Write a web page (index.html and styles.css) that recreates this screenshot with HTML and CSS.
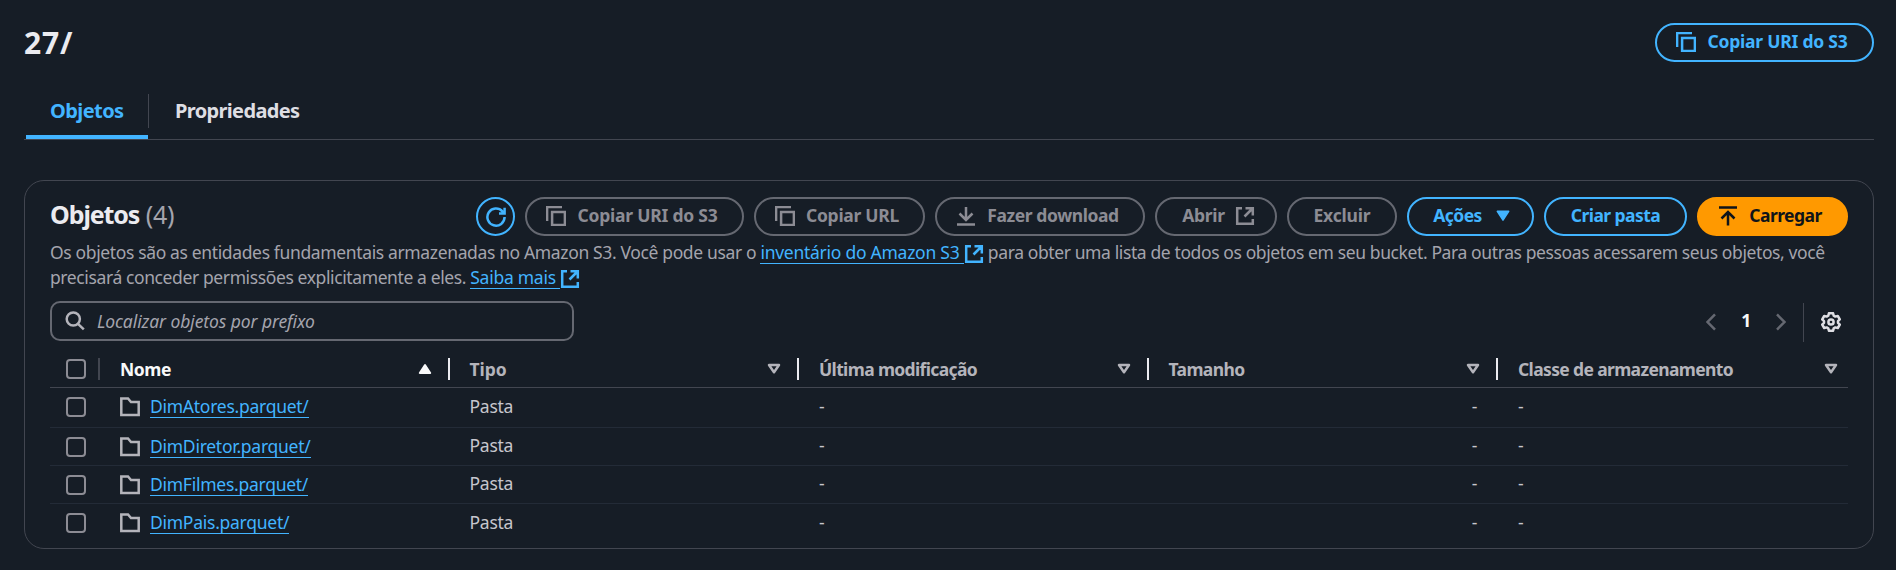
FILE: index.html
```html
<!DOCTYPE html>
<html lang="pt-BR">
<head>
<meta charset="utf-8">
<title>27/</title>
<link rel="stylesheet" href="styles.css">
</head>
<body>
<svg class="sprite" aria-hidden="true">
  <symbol id="copy" viewBox="0 0 20 20"><path d="M1.1 15V1.1H16M6.1 6.1H18.9V18.9H6.1Z"/></symbol>
  <symbol id="external" viewBox="0 0 20 20"><path d="M7 2.2H2.2V17.8H17.8V13M10.5 2.2H17.8V9.5M17.5 2.5L9.5 10.5"/></symbol>
  <symbol id="folder" viewBox="0 0 20 20"><path d="M1.3 18V1.5H8L11 5H18.7V18Z"/></symbol>
  <symbol id="sort" viewBox="0 0 14 12"><path d="M2 2H12L7 9.2Z"/></symbol>
</svg>
<main class="page">
  <header class="page-head">
    <h1>27/</h1>
    <button class="btn lead w-uri"><svg class="ico"><use href="#copy"/></svg><span class="t-uri">Copiar URI do S3</span></button>
  </header>
  <nav class="tabs">
    <a class="tab active">Objetos</a>
    <a class="tab second">Propriedades</a>
  </nav>
  <section class="card">
    <div class="card-head">
      <h2>Objetos <span>(4)</span></h2>
      <div class="actions">
        <button class="btn round"><svg class="ico" viewBox="0 0 20 20"><path d="M18.6 10A8.6 8.6 0 1 1 16.4 4.3L18.4 6.2M18.6 0.8V6.4H13"/></svg></button>
        <button class="btn off lead w-uri"><svg class="ico"><use href="#copy"/></svg><span class="t-uri">Copiar URI do S3</span></button>
        <button class="btn off lead w-url"><svg class="ico"><use href="#copy"/></svg><span class="t-url">Copiar URL</span></button>
        <button class="btn off lead w-down"><svg class="ico" viewBox="0 0 20 20"><path d="M10 1V13.5M3.5 7.5L10 14L16.5 7.5M1 18.4H19"/></svg><span class="t-down">Fazer download</span></button>
        <button class="btn off w-open"><span class="t-open">Abrir</span><svg class="ico"><use href="#external"/></svg></button>
        <button class="btn off w-del"><span class="t-del">Excluir</span></button>
        <button class="btn w-act"><span class="t-tight">Ações</span><svg class="caret" viewBox="0 0 14 12"><path d="M1.3 1.3H12.7L7 10.2Z"/></svg></button>
        <button class="btn w-new"><span class="t-tight">Criar pasta</span></button>
        <button class="btn primary lead w-up"><svg class="ico" viewBox="0 0 20 20"><path d="M1 1.6H19M10 19.5V6.5M3.5 12.5L10 6L16.5 12.5"/></svg><span class="t-tight">Carregar</span></button>
      </div>
    </div>
    <div class="desc">
      <p><span>Os objetos são as entidades fundamentais armazenadas no Amazon S3. Você pode usar o </span><a class="link">inventário do Amazon S3 </a><svg class="ico ext"><use href="#external"/></svg><span class="after"> para obter uma lista de todos os objetos em seu bucket. Para outras pessoas acessarem seus objetos, você</span></p>
      <p><span class="after">precisará conceder permissões explicitamente a eles. </span><a class="link">Saiba mais </a><svg class="ico ext"><use href="#external"/></svg></p>
    </div>
    <div class="tools">
      <div class="search"><svg class="ico" viewBox="0 0 20 20"><circle cx="8.3" cy="8" r="6.6"/><path d="M13 12.8L18.8 18.4"/></svg><span>Localizar objetos por prefixo</span></div>
      <div class="pager">
        <svg class="chev" viewBox="0 0 10 18"><path d="M9 1.4L1.6 9L9 16.6"/></svg>
        <b>1</b>
        <svg class="chev" viewBox="0 0 10 18"><path d="M1 1.4L8.4 9L1 16.6"/></svg>
        <i></i>
        <svg class="ico gear" viewBox="0 0 20 20"><path d="M8 1.2H12L12.7 3.7L14.3 4.6L16.8 4L18.8 7.4L17 9.2V10.8L18.8 12.6L16.8 16L14.3 15.4L12.7 16.3L12 18.8H8L7.3 16.3L5.7 15.4L3.2 16L1.2 12.6L3 10.8V9.2L1.2 7.4L3.2 4L5.7 4.6L7.3 3.7Z"/><circle cx="10" cy="10" r="2.6"/></svg>
      </div>
    </div>
    <div class="table">
      <div class="row head">
        <div class="pick"><span class="box"></span></div>
        <div class="cell sorted"><span>Nome</span><svg class="sort" viewBox="0 0 14 12"><path d="M1.8 10H12.2L7 2Z"/></svg></div>
        <div class="cell"><span class="t-tipo">Tipo</span><svg class="sort"><use href="#sort"/></svg></div>
        <div class="cell"><span>Última modificação</span><svg class="sort"><use href="#sort"/></svg></div>
        <div class="cell"><span>Tamanho</span><svg class="sort"><use href="#sort"/></svg></div>
        <div class="cell last"><span>Classe de armazenamento</span><svg class="sort"><use href="#sort"/></svg></div>
      </div>
      <div class="row r1"><div class="pick"><span class="box"></span></div><div class="cell"><svg class="ico"><use href="#folder"/></svg><a class="link">DimAtores.parquet/</a></div><div class="cell">Pasta</div><div class="cell">-</div><div class="cell num">-</div><div class="cell">-</div></div>
      <div class="row"><div class="pick"><span class="box"></span></div><div class="cell"><svg class="ico"><use href="#folder"/></svg><a class="link">DimDiretor.parquet/</a></div><div class="cell">Pasta</div><div class="cell">-</div><div class="cell num">-</div><div class="cell">-</div></div>
      <div class="row"><div class="pick"><span class="box"></span></div><div class="cell"><svg class="ico"><use href="#folder"/></svg><a class="link">DimFilmes.parquet/</a></div><div class="cell">Pasta</div><div class="cell">-</div><div class="cell num">-</div><div class="cell">-</div></div>
      <div class="row"><div class="pick"><span class="box"></span></div><div class="cell"><svg class="ico"><use href="#folder"/></svg><a class="link">DimPais.parquet/</a></div><div class="cell">Pasta</div><div class="cell">-</div><div class="cell num">-</div><div class="cell">-</div></div>
    </div>
  </section>
</main>
</body>
</html>
```
FILE: styles.css
```css
* { box-sizing: border-box; }
body {
  margin: 0;
  background: #161d26;
  color: #c6c6cd;
  font: 17.5px/25px "Noto Sans", sans-serif;
  letter-spacing: -0.26px;
  overflow: hidden;
}
.sprite { display: none; }
svg { fill: none; stroke: currentColor; stroke-width: 2.5; flex: none; }
.ico { width: 20px; height: 20px; }
.page { padding: 23px 22px 0 24px; }

.page-head { display: flex; justify-content: space-between; height: 39px; }
h1 { margin: 0; font-size: 30px; line-height: 40px; letter-spacing: 0.9px; color: #ebebf0; }

.btn {
  display: flex; align-items: center; justify-content: center; gap: 11px;
  height: 39px; padding: 0 0 1px;
  border: 2px solid #42b4ff; border-radius: 20px;
  background: transparent; color: #42b4ff;
  font: bold 17.5px/25px "Noto Sans", sans-serif;
  white-space: nowrap;
}
.btn span { margin-top: -1px; }
.btn.lead { padding-right: 5px; }
.btn.off { border-color: #656871; color: #8c8c94; }
.btn.primary { border-color: #ff9900; background: #ff9900; color: #0f141a; }
.btn.round { width: 39px; padding: 0; }
.w-uri { width: 219px; }
.w-url { width: 171px; }
.w-down { width: 210px; }
.w-open { width: 122px; padding-left: 5px; gap: 10px; }
.w-del { width: 110px; }
.w-act { width: 127px; padding-left: 2px; gap: 14px; }
.w-new { width: 143px; }
.w-up { width: 151px; }
.t-uri { letter-spacing: -0.22px; }
.t-url { letter-spacing: -0.28px; }
.t-down { letter-spacing: -0.41px; }
.t-open { letter-spacing: -0.31px; }
.t-del { letter-spacing: -0.18px; }
.t-tight { letter-spacing: -0.56px; }
.caret { width: 14px; height: 12px; }
.caret path { fill: currentColor; stroke-width: 1.5; stroke-linejoin: round; }

.tabs { display: flex; height: 77px; padding: 32px 2px 0; border-bottom: 1px solid #424650; margin-bottom: 41px; height: 78px; }
.tab { height: 45px; font-weight: bold; font-size: 20px; line-height: 34px; color: #dedee3; letter-spacing: -0.65px; }
.tab.active { width: 122px; padding-left: 24px; color: #42b4ff; letter-spacing: -0.58px; border-bottom: 4px solid #42b4ff; border-radius: 2px 2px 0 0; }
.tab.second { height: 34px; padding-left: 26px; border-left: 1px solid #424650; }

.card { margin-top: 40px; height: 369px; padding: 16px 25px 0; border: 1px solid #424650; border-radius: 20px; }
.tabs + .card { margin-top: -1px; }
.card-head { display: flex; justify-content: space-between; height: 39px; }
h2 { margin: 0; font-size: 25px; line-height: 35px; letter-spacing: -1.1px; color: #ebebf0; }
h2 span { font-weight: normal; letter-spacing: -0.3px; color: #a4a4ad; margin-left: 1px; }
.actions { display: flex; gap: 10px; }

.desc { padding-top: 4px; color: #a4a4ad; letter-spacing: -0.36px; }
.desc p { margin: 0; height: 25px; display: flex; white-space: pre; }
.link { color: #42b4ff; box-shadow: inset 0 -1px 0 #42b4ff; height: 24px; letter-spacing: -0.26px; }
.ext { margin-top: 4px; color: #42b4ff; }
.after { letter-spacing: -0.39px; }

.tools { display: flex; justify-content: space-between; margin-top: 11px; height: 40px; }
.search { display: flex; align-items: center; width: 524px; padding-left: 13px; gap: 12px; border: 2px solid #656871; border-radius: 10px; color: #b4b4bb; font-style: italic; letter-spacing: -0.09px; }
.search span { color: #a4a4ad; }
.pager { display: flex; align-items: center; padding: 2px 7px 0 0; color: #656871; }
.pager b { width: 60px; text-align: center; color: #f9f9fa; padding-bottom: 3px; }
.pager i { width: 1px; height: 39px; margin: 0 17px; background: #424650; }
.chev { width: 10px; height: 18px; }
.gear { color: #dedee3; stroke-linejoin: round; }

.table { margin-top: 8px; }
.row { display: grid; grid-template-columns: 50px 349.5px 349.5px 349.5px 349.5px 1fr; height: 38px; align-items: center; border-bottom: 1px solid #232b37; }
.row:last-child { border: 0; }
.row.r1 { height: 40px; padding-bottom: 1px; }
.row.head { height: 39px; font-weight: bold; border-color: #424650; color: #b4b4bb; letter-spacing: -0.64px; padding-top: 2px; }
.pick { display: flex; height: 22px; padding: 0 0 0 16px; align-items: center; }
.head .pick { border-right: 2px solid #424650; }
.box { width: 20px; height: 20px; border: 2px solid #8c8c94; border-radius: 4px; }
.cell { display: flex; align-items: center; height: 22px; padding-left: 20px; }
.row:not(.head) .cell { padding-bottom: 2px; }
.cell .ico { margin: 2px 10px 0 0; color: #b4b4bb; }
.head .cell { justify-content: space-between; padding-right: 16px; border-right: 2px solid #ebebf0; }
.head .last { border: 0; padding-right: 10px; }
.head .sorted { color: #f9f9fa; letter-spacing: -0.42px; }
.t-tipo { letter-spacing: -0.08px; }
.sort { width: 14px; height: 12px; stroke-linejoin: round; }
.sorted .sort path { fill: currentColor; stroke-width: 2; }
.num { justify-content: flex-end; padding-right: 21px; }
```
